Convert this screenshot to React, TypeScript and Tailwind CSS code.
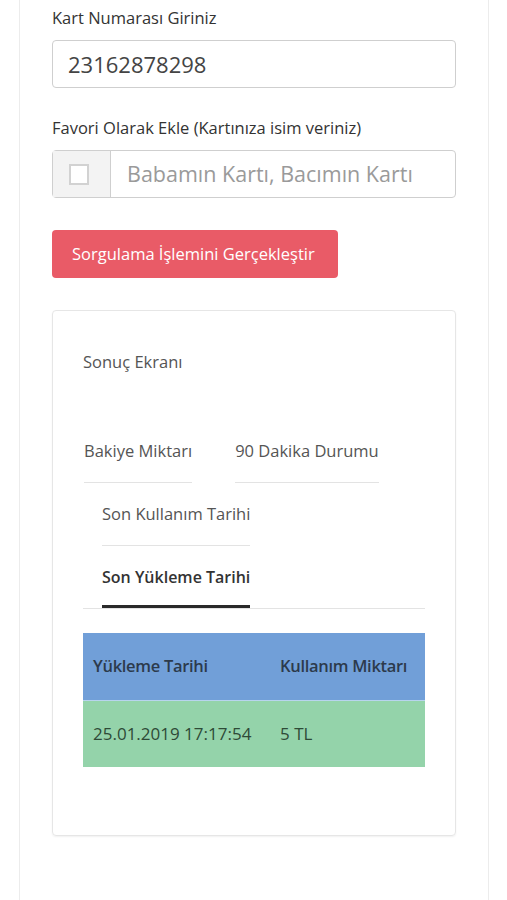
const tabRow1 = ['Bakiye Miktarı', '90 Dakika Durumu'];

export default function App() {
  return (
    <div
      className="min-h-[900px] bg-white"
      style={{ fontFamily: '"Open Sans", "Noto Sans", sans-serif' }}
    >
      <div className="ml-[19px] w-[470px] min-h-[900px] border-x border-[#ececec] px-8 pt-[6px] pb-10 text-[#333]">
        <label className="block text-[16.5px] leading-6">Kart Numarası Giriniz</label>
        <div className="mt-2.5 flex h-12 items-center rounded border border-[#cfcfcf] px-[15px] text-[22px] text-[#444]">
          23162878298
        </div>

        <label className="mt-7 block text-[16.5px] leading-6">
          Favori Olarak Ekle (Kartınıza isim veriniz)
        </label>
        <div className="mt-2.5 flex h-12 rounded border border-[#cfcfcf]">
          <div className="flex w-[58px] items-center border-r border-[#cfcfcf] bg-[#f3f3f3] pl-4">
            <div className="h-[21px] w-[20px] border-2 border-[#d2d2d2] bg-white" />
          </div>
          <div className="flex flex-1 items-center px-4 text-[21.5px] text-[#9a9a9a]">
            Babamın Kartı, Bacımın Kartı
          </div>
        </div>

        <button className="mt-8 flex h-12 w-[286px] items-center rounded bg-[#e95b67] px-5 text-[16.5px] text-white">
          Sorgulama İşlemini Gerçekleştir
        </button>

        <div className="mt-8 rounded border border-[#e6e6e6] px-[30px] pt-[39px] pb-[68px] shadow-[0_1px_2px_rgba(0,0,0,0.06)]">
          <div className="text-[16.5px] leading-6 text-[#555]">Sonuç Ekranı</div>

          <div className="mt-[46px] border-b border-[#e3e3e3] text-[16.5px] leading-6 text-[#555]">
            <div className="flex gap-[43px] pl-px">
              {tabRow1.map((t) => (
                <div key={t} className="border-b border-[#e3e3e3] pt-[19px] pb-[19px]">
                  {t}
                </div>
              ))}
            </div>
            <div className="ml-[19px] flex">
              <div className="border-b border-[#e3e3e3] pt-[19px] pb-[19px]">Son Kullanım Tarihi</div>
            </div>
            <div className="ml-[19px] flex">
              <div className="border-b-[3px] border-[#2a2a2a] pt-[19px] pb-[16px] text-[16px] font-semibold text-[#333]">
                Son Yükleme Tarihi
              </div>
            </div>
          </div>

          <table className="mt-6 w-full border-collapse">
            <thead>
              <tr className="h-[67px] bg-[#719fd8] text-left text-[16.5px] tracking-[-0.3px] text-[#2c3a4c]">
                <th className="w-[197px] pl-[10px] font-semibold">Yükleme Tarihi</th>
                <th className="font-semibold">Kullanım Miktarı</th>
              </tr>
            </thead>
            <tbody>
              <tr className="h-[67px] border-t border-[#b8d4ee] bg-[#94d3aa] text-[17px] text-[#2e4a37]">
                <td className="pl-[10px]">25.01.2019 17:17:54</td>
                <td>5 TL</td>
              </tr>
            </tbody>
          </table>
        </div>
      </div>
    </div>
  );
}
